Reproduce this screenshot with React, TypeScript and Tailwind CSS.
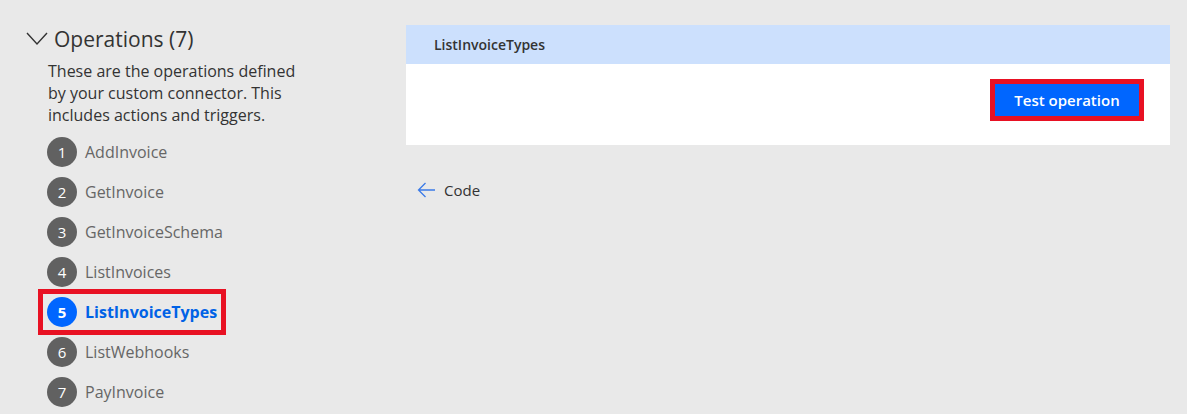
const ops = [
  "AddInvoice",
  "GetInvoice",
  "GetInvoiceSchema",
  "ListInvoices",
  "ListInvoiceTypes",
  "ListWebhooks",
  "PayInvoice",
]

export default function App() {
  return (
    <div className="w-[1187px] h-[414px] overflow-hidden bg-[#e9e9e9] flex font-['Segoe_UI','Open_Sans',sans-serif] text-[#333]">
      {/* left column */}
      <div className="w-[406px] shrink-0 pl-[26px] pt-[25px]">
        <div className="flex items-center h-[28px]">
          <svg width="22" height="14" viewBox="0 0 22 14" fill="none" stroke="#333" strokeWidth="1.4">
            <polyline points="1,1 11,12 21,1" />
          </svg>
          <h2 className="ml-[6px] text-[21px] leading-[28px]">Operations (7)</h2>
        </div>
        <p className="ml-[22px] mt-[7px] w-[260px] text-[16px] leading-[22px] text-[#333]">
          These are the operations defined by your custom connector. This includes actions and triggers.
        </p>
        <div className="mt-[6px] flex flex-col">
          {ops.map((op, i) => {
            const active = i === 4
            return (
              <div key={op} className="h-[40px] flex items-center">
                <div
                  className={
                    active
                      ? "ml-[12px] h-[46px] pl-[4px] pr-[4px] flex items-center border-[5px] border-[#e81123]"
                      : "ml-[21px] flex items-center"
                  }
                >
                  <span
                    className={
                      active
                        ? "w-[30px] h-[30px] rounded-full bg-[#0066ff] text-white text-[15px] font-bold flex items-center justify-center"
                        : "w-[30px] h-[30px] rounded-full bg-[#616161] text-white text-[15px] flex items-center justify-center"
                    }
                  >
                    {i + 1}
                  </span>
                  <span
                    className={
                      active
                        ? "ml-[8px] text-[16px] font-bold text-[#0062e6]"
                        : "ml-[8px] text-[16px] text-[#666]"
                    }
                  >
                    {op}
                  </span>
                </div>
              </div>
            )
          })}
        </div>
      </div>

      {/* right column */}
      <div className="flex-1 pt-[25px]">
        <div className="w-[764px] bg-white">
          <div className="h-[39px] bg-[#cce0fd] flex items-center pl-[28px] text-[14px] font-semibold text-[#333]">
            ListInvoiceTypes
          </div>
          <div className="h-[81px] flex justify-end items-start pt-[15px] pr-[26px]">
            <div className="border-[5px] border-[#e81123]">
              <button className="w-[144px] h-[32px] bg-[#0066ff] text-white text-[15px] font-semibold">
                Test operation
              </button>
            </div>
          </div>
        </div>
        <div className="mt-[34px] ml-[11px] flex items-center text-[15px] text-[#333]">
          <svg width="19" height="16" viewBox="0 0 19 16" fill="none" stroke="#3b7be8" strokeWidth="1.3">
            <path d="M18 8H1.5M8.5 1L1.5 8L8.5 15" />
          </svg>
          <span className="ml-[8px]">Code</span>
        </div>
      </div>
    </div>
  )
}
